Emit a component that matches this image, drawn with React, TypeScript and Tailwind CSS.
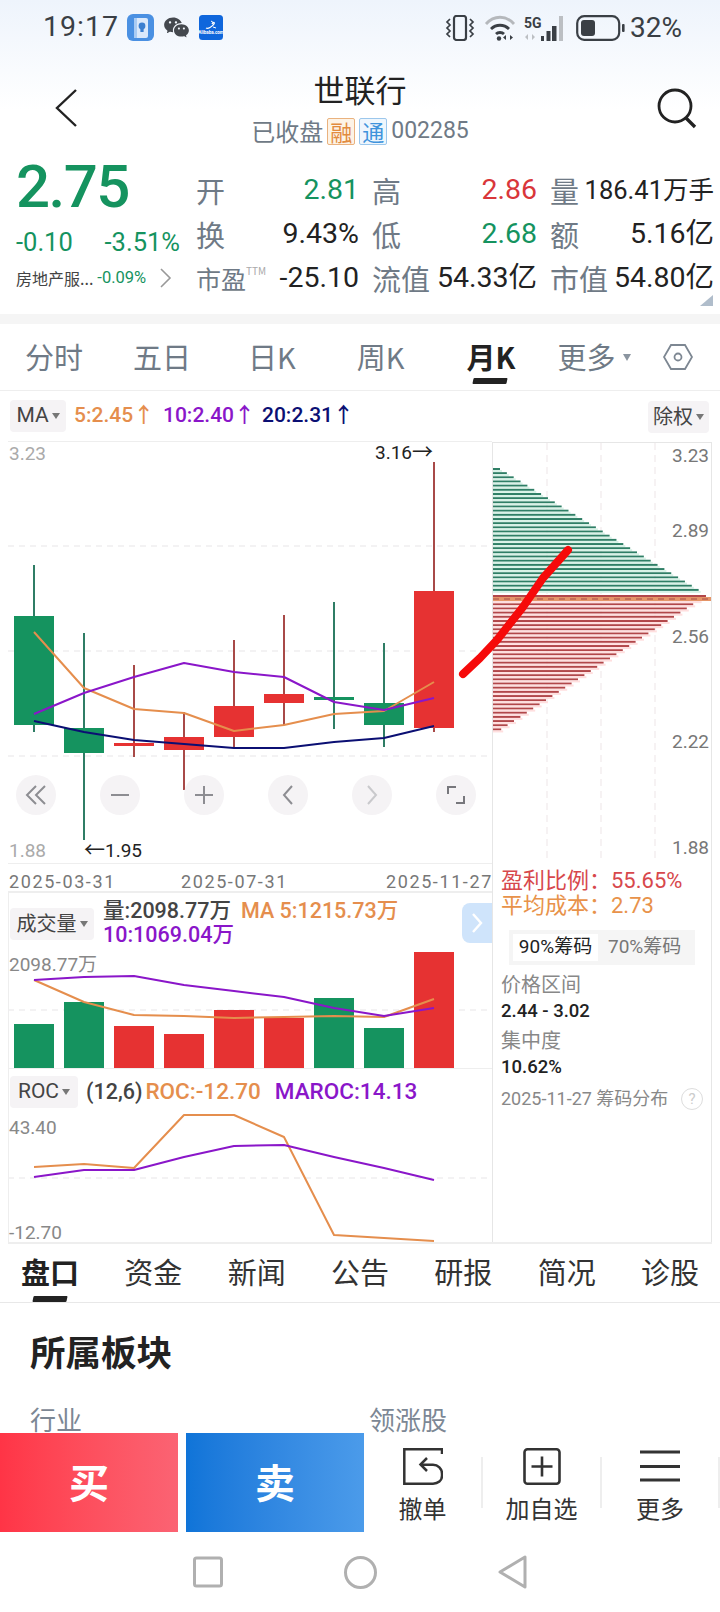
import type { ReactNode } from 'react'
import { RiWechatFill } from 'react-icons/ri'

const cjk = '"Noto Sans CJK SC", sans-serif'
const num = 'Roboto, "Noto Sans CJK SC", sans-serif'

const xs = [34, 84, 134, 184, 234, 284, 334, 384, 434]
const GREEN = '#15935f'
const RED = '#e63232'
const ORANGE = '#e58e4d'
const PURPLE = '#8a16c9'
const NAVY = '#0b0f73'

// [wick top, wick bottom, body top, body bottom, up]
const candles: [number, number, number, number, boolean][] = [
  [565, 732, 616, 725, false],
  [633, 840, 728, 753, false],
  [665, 757, 743, 746, true],
  [712, 790, 737, 750, true],
  [640, 747, 706, 737, true],
  [615, 725, 694, 703, true],
  [602, 729, 697, 700, false],
  [643, 747, 703, 725, false],
  [462, 732, 591, 728, true],
]

const ma5 = [632, 688, 709, 713, 731, 725, 714, 711, 682]
const ma10 = [714, 693, 677, 663, 672, 677, 702, 710, 698]
const ma20 = [721, 732, 740, 744, 748, 748, 742, 738, 726]

const volTops = [1024, 1002, 1026, 1034, 1010, 1018, 998, 1028, 952]
const volUp = [false, false, true, true, true, true, false, false, true]
const volMa5 = [980, 1002, 1015, 1016, 1018, 1017, 1016, 1017, 999]
const volMa10 = [980, 977, 976, 985, 991, 997, 1008, 1016, 1008]

const roc = [1167, 1164, 1168, 1115, 1115, 1137, 1235, 1238, 1241]
const maroc = [1177, 1170, 1170, 1157, 1146, 1145, 1157, 1168, 1180]

const pts = (ys: number[]) => ys.map((y, i) => `${xs[i]},${y}`).join(' ')

function Line({ ys, color }: { ys: number[]; color: string }) {
  return <polyline points={pts(ys)} fill="none" stroke={color} strokeWidth="2" strokeLinejoin="round" />
}

function Dash({ y, x1 = 8, x2 = 492 }: { y: number; x1?: number; x2?: number }) {
  return <line x1={x1} x2={x2} y1={y} y2={y} stroke="#efeef0" strokeWidth="1.5" strokeDasharray="6 5" />
}

function Rule({ thick }: { thick?: boolean }) {
  return <div className={`ml-[8px] shrink-0 bg-[#eeeeee] ${thick ? 'h-[2px]' : 'h-px'}`} />
}

function Chip({ label, className }: { label: string; className: string }) {
  return (
    <div className={`flex h-8 items-center justify-center gap-[3px] rounded bg-[#f5f3f5] text-[21px] font-normal text-[#444] ${className}`}>
      <span>{label}</span>
      <span className="border-x-[4.5px] border-t-[6px] border-x-transparent border-t-[#777]" />
    </div>
  )
}

function StatusBar() {
  return (
    <div className="flex h-[54px] items-center pl-[43px] pr-[38px] pt-[1px]" style={{ fontFamily: num }}>
      <span className="text-[28.5px] leading-none tracking-[1px] text-[#3a3f45]">19:17</span>
      <svg className="ml-[8px]" width="27" height="27" viewBox="0 0 27 27">
        <rect width="27" height="27" rx="6" fill="#4a90e2" />
        <path d="M7 4h12a2 2 0 012 2v16a2 2 0 01-2 2H7z" fill="#dbe9fb" />
        <rect x="7" y="4" width="3" height="20" fill="#a9cbf3" />
        <circle cx="15" cy="12" r="3.4" fill="#3b7fd0" />
        <rect x="13.4" y="15" width="3.2" height="3" fill="#3b7fd0" />
      </svg>
      <RiWechatFill className="ml-[9px] text-[#44484e]" size={27} />
      <svg className="ml-[9px]" width="24" height="25" viewBox="0 0 24 25">
        <rect width="24" height="25" rx="3.5" fill="#0f66dc" />
        <path d="M7 13c2 1 6-1 8-4 1-2-1-2-2 0" fill="none" stroke="#fff" strokeWidth="1.3" />
        <path d="M12 6l3 2M14 12l3 1" fill="none" stroke="#fff" strokeWidth="1" />
        <text x="12" y="19" fontSize="4.5" fontWeight="700" fill="#fff" textAnchor="middle">Alibaba.com</text>
      </svg>
      <svg className="ml-auto" width="30" height="26" viewBox="0 0 30 26" fill="none" stroke="#3a3f45" strokeWidth="2.2">
        <rect x="9" y="1" width="12" height="24" rx="2.5" />
        <path d="M5 4L2 7l3 3-3 3 3 3-3 3 3 3M25 4l3 3-3 3 3 3-3 3 3 3-3 3" strokeWidth="1.7" />
      </svg>
      <svg className="ml-[9px]" width="32" height="26" viewBox="0 0 32 26" fill="none">
        <path d="M2 9c8-9 20-9 28 0" strokeWidth="2.8" stroke="#b5b8bc" />
        <path d="M7 14c5-5 13-5 18 0" strokeWidth="2.8" stroke="#3a3f45" />
        <path d="M12 19c2-2 6-2 8 0" strokeWidth="2.8" stroke="#3a3f45" />
        <circle cx="15" cy="23.5" r="2.2" fill="#3a3f45" />
        <path d="M22 20v5l-3-2.5zM26 20v5l3-2.5z" fill="#3a3f45" />
      </svg>
      <div className="relative ml-[8px] h-[26px] w-[40px]">
        <span className="absolute left-0 top-[1px] text-[14px] font-bold leading-none text-[#3a3f45]">5G</span>
        <svg className="absolute inset-0" width="40" height="26" viewBox="0 0 40 26" fill="#3a3f45">
          <rect x="17" y="21" width="3" height="5" />
          <rect x="22.5" y="16" width="4" height="10" />
          <rect x="28" y="11" width="4.5" height="15" />
          <rect x="35" y="1" width="4" height="25" fill="#bcbfc3" />
          <path d="M4 19v6l-3-3zM8 19v6l3-3z" fill="#bcbfc3" />
        </svg>
      </div>
      <svg className="ml-[12px]" width="49" height="26" viewBox="0 0 49 26">
        <rect x="1.2" y="1.2" width="42" height="23.6" rx="7" fill="none" stroke="#3a3f45" strokeWidth="2.2" />
        <rect x="5" y="5" width="14" height="16" rx="3" fill="#3a3f45" />
        <rect x="46" y="9" width="2.6" height="8" rx="1" fill="#3a3f45" />
      </svg>
      <span className="ml-[5px] text-[28px] leading-none text-[#3a3f45]">32%</span>
    </div>
  )
}

function TitleBar() {
  return (
    <div className="grid h-[98px] grid-cols-[1fr_auto_1fr] items-start px-[22px]">
      <svg className="ml-[32px] mt-[34px]" width="24" height="40" viewBox="0 0 24 40" fill="none" stroke="#222" strokeWidth="2.4">
        <path d="M22 2L3 20l19 18" />
      </svg>
      <div className="flex flex-col items-center" style={{ fontFamily: cjk }}>
        <div className="mt-[15px] h-[40px] text-[31px] leading-[40px] text-[#222]">世联行</div>
        <div className="mt-[8px] flex items-center gap-[4px] text-[24px] leading-[28px] text-[#6f7a86]">
          <span>已收盘</span>
          <span className="flex h-[27px] w-[28px] items-center justify-center rounded-[2px] border border-[#eab27e] bg-[#fdf3e6] text-[22px] text-[#e28b3e]">融</span>
          <span className="flex h-[27px] w-[28px] items-center justify-center rounded-[2px] border border-[#9cc7ec] bg-[#eef6fd] text-[22px] text-[#3f93dc]">通</span>
          <span style={{ fontFamily: num }} className="text-[23px]">002285</span>
        </div>
      </div>
      <svg className="mt-[34px] justify-self-end" width="42" height="42" viewBox="0 0 42 42" fill="none" stroke="#222" strokeWidth="2.8">
        <circle cx="19" cy="18" r="16" />
        <path d="M30 30l9 9" strokeWidth="3.4" />
      </svg>
    </div>
  )
}

function Cell({ label, value, color = '#222', small }: { label: string; value: string; color?: string; small?: boolean }) {
  return (
    <div className="flex h-[44px] items-center justify-between">
      <span className="text-[29px] leading-[40px] text-[#6f7a86]" style={{ fontFamily: cjk }}>{label}</span>
      <span className={`leading-[44px] ${small ? 'text-[25.5px]' : 'text-[28.5px]'}`} style={{ color, fontFamily: num }}>{value}</span>
    </div>
  )
}

function Quote() {
  return (
    <div className="relative flex h-[162px] pl-[16px] pr-[6px]">
      <div className="w-[164px] shrink-0" style={{ fontFamily: num }}>
        <div className="h-[70px] text-[60px] font-medium leading-[70px] tracking-[-1.5px] text-[#15935f]">2.75</div>
        <div className="mt-[5px] flex justify-between text-[25.5px] leading-[30px] text-[#15935f]">
          <span>-0.10</span>
          <span>-3.51%</span>
        </div>
        <div className="mt-[8px] flex items-center whitespace-nowrap text-[16.5px] leading-[26px]">
          <span className="text-[#444] text-[16px]" style={{ fontFamily: cjk }}>房地产服...</span>
          <span className="ml-[4px] text-[#15935f]">-0.09%</span>
          <svg className="ml-[13px] shrink-0" width="13" height="20" viewBox="0 0 13 20" fill="none" stroke="#999" strokeWidth="1.6">
            <path d="M2 1l9 9-9 9" />
          </svg>
        </div>
      </div>
      <div className="ml-[16px] grid flex-1 grid-cols-[163px_165px_1fr] content-start gap-x-[13px] pt-[16px]">
        <Cell label="开" value="2.81" color="#15935f" />
        <Cell label="高" value="2.86" color="#d9363a" />
        <Cell label="量" value="186.41万手" small />
        <Cell label="换" value="9.43%" />
        <Cell label="低" value="2.68" color="#15935f" />
        <Cell label="额" value="5.16亿" />
        <div className="flex h-[44px] items-center justify-between">
          <span className="flex items-start whitespace-nowrap text-[25px] leading-[30px] text-[#6f7a86]" style={{ fontFamily: cjk }}>
            市盈<span className="text-[10px] leading-[16px] text-[#aaa]">TTM</span>
          </span>
          <span className="text-[28.5px] leading-[44px] text-[#222]" style={{ fontFamily: num }}>-25.10</span>
        </div>
        <Cell label="流值" value="54.33亿" />
        <Cell label="市值" value="54.80亿" />
      </div>
      <span className="absolute bottom-[8px] right-[7px] border-b-[11px] border-l-[13px] border-b-[#b0bdcb] border-l-transparent" />
    </div>
  )
}

function PeriodTabs() {
  const tabs = ['分时', '五日', '日K', '周K']
  return (
    <div className="relative flex h-[67px] items-center border-b border-[#eeeeee] text-[29px] text-[#6f7a86]" style={{ fontFamily: cjk }}>
      <span className="ml-[25px]">{tabs[0]}</span>
      <span className="ml-[50px]">{tabs[1]}</span>
      <span className="ml-[57px]">{tabs[2]}</span>
      <span className="ml-[61px]">{tabs[3]}</span>
      <span className="relative ml-[62px] font-bold text-[#222]">
        月K
        <span className="absolute left-[6px] top-[43px] h-[6px] w-[34px] -skew-x-12 rounded-[1px] bg-[#222]" />
      </span>
      <span className="ml-[42px]">更多</span>
      <span className="ml-[8px] border-x-[4.5px] border-t-[7px] border-x-transparent border-t-[#8b95a0]" />
      <svg className="ml-[32px]" width="30" height="28" viewBox="0 0 30 28" fill="none" stroke="#7d8792" strokeWidth="1.8">
        <path d="M8 2h14l7 12-7 12H8L1 14z" />
        <circle cx="15" cy="14" r="3.5" />
      </svg>
    </div>
  )
}

function RoundBtn({ children }: { children: ReactNode }) {
  return <div className="flex h-10 w-10 items-center justify-center rounded-full bg-[#f5f3f5]">{children}</div>
}

function Arrow({ children }: { children: string }) {
  return <span className="text-[21px] leading-none" style={{ fontFamily: cjk }}>{children}</span>
}

function KChart() {
  return (
    <div className="relative h-[421px] shrink-0">
      <svg className="absolute inset-0" width="492" height="420" viewBox="0 442 492 420">
        <Dash y={546} />
        <Dash y={651} />
        <Dash y={756} />
        {candles.map(([wt, wb, bt, bb, up], i) => (
          <g key={i}>
            <line x1={xs[i]} x2={xs[i]} y1={wt} y2={wb} stroke={up ? '#a84a48' : '#2f7d65'} strokeWidth="2" />
            <rect x={xs[i] - 20} y={bt} width="40" height={bb - bt} fill={up ? RED : GREEN} />
          </g>
        ))}
        <Line ys={ma5} color={ORANGE} />
        <Line ys={ma10} color={PURPLE} />
        <Line ys={ma20} color={NAVY} />
      </svg>
      <span className="absolute left-[9px] top-0 text-[19px] leading-[24px] text-[#aaa]">3.23</span>
      <span className="absolute left-[375px] -top-[2px] whitespace-nowrap text-[19px] leading-[24px] text-[#222]">3.16<Arrow>→</Arrow></span>
      <span className="absolute left-[84px] top-[396px] whitespace-nowrap text-[19px] leading-[24px] text-[#222]"><Arrow>←</Arrow>1.95</span>
      <span className="absolute bottom-0 left-[9px] text-[19px] leading-[24px] text-[#aaa]">1.88</span>
      <div className="absolute left-[16px] top-[333px] flex w-[460px] justify-between">
        <RoundBtn>
          <svg width="22" height="20" viewBox="0 0 22 20" fill="none" stroke="#8d8d92" strokeWidth="2"><path d="M11 1l-9 9 9 9M20 1l-9 9 9 9" /></svg>
        </RoundBtn>
        <RoundBtn>
          <svg width="20" height="4" viewBox="0 0 20 4" fill="none" stroke="#8d8d92" strokeWidth="2"><path d="M1 2h18" /></svg>
        </RoundBtn>
        <RoundBtn>
          <svg width="20" height="20" viewBox="0 0 20 20" fill="none" stroke="#8d8d92" strokeWidth="2"><path d="M1 10h18M10 1v18" /></svg>
        </RoundBtn>
        <RoundBtn>
          <svg width="12" height="20" viewBox="0 0 12 20" fill="none" stroke="#8d8d92" strokeWidth="2"><path d="M10 1l-8 9 8 9" /></svg>
        </RoundBtn>
        <RoundBtn>
          <svg width="12" height="20" viewBox="0 0 12 20" fill="none" stroke="#c9c9cc" strokeWidth="2"><path d="M2 1l8 9-8 9" /></svg>
        </RoundBtn>
        <RoundBtn>
          <svg width="20" height="20" viewBox="0 0 20 20" fill="none" stroke="#77777c" strokeWidth="2"><path d="M10 2H2v7M10 18h8v-7" /></svg>
        </RoundBtn>
      </div>
    </div>
  )
}

function VolumePanel() {
  return (
    <div className="relative h-[175px] shrink-0">
      <svg className="absolute inset-0" width="492" height="175" viewBox="0 893 492 175">
        <line x1={8.5} x2={8.5} y1={893} y2={1068} stroke="#eeeeee" />
        <Dash y={1010} />
        {xs.map((x, i) => (
          <rect key={x} x={x - 20} y={volTops[i]} width="40" height={1068 - volTops[i]} fill={volUp[i] ? RED : GREEN} />
        ))}
        <Line ys={volMa5} color={ORANGE} />
        <Line ys={volMa10} color={PURPLE} />
      </svg>
      <div className="relative flex h-[59px] pl-[10px]">
        <Chip label="成交量" className="mt-[15px] w-[84px] !text-[20px]" />
        <div className="ml-[9px] mt-[6px] text-[21.5px] font-medium leading-[24px]" style={{ fontFamily: num }}>
          <div className="whitespace-nowrap">
            <span className="text-[#444]">量:2098.77万</span>
            <span className="ml-[10px] text-[#e58e4d]">MA 5:1215.73万</span>
          </div>
          <div className="text-[#8a16c9]">10:1069.04万</div>
        </div>
        <div className="absolute right-0 top-[10px] flex h-[40px] w-[30px] items-center justify-center rounded-l-lg bg-[#cfe4fb]">
          <svg width="12" height="22" viewBox="0 0 12 22" fill="none" stroke="#fff" strokeWidth="2.4"><path d="M2 2l8 9-8 9" /></svg>
        </div>
      </div>
      <span className="absolute left-[9px] top-[60px] text-[19px] leading-[24px] text-[#888]">2098.77万</span>
    </div>
  )
}

function RocPanel() {
  return (
    <div className="relative h-[173px] shrink-0">
      <svg className="absolute inset-0" width="492" height="173" viewBox="0 1069 492 173">
        <line x1={8.5} x2={8.5} y1={1069} y2={1242} stroke="#eeeeee" />
        <Dash y={1178} />
        <Line ys={roc} color={ORANGE} />
        <Line ys={maroc} color={PURPLE} />
      </svg>
      <div className="relative flex items-center pl-[10px] pt-[6px] text-[22.5px] font-medium" style={{ fontFamily: num }}>
        <Chip label="ROC" className="w-[68px]" />
        <span className="ml-[8px] text-[21.5px] text-[#444]">(12,6)</span>
        <span className="ml-[3px] text-[#e58e4d]">ROC:-12.70</span>
        <span className="ml-[14px] text-[#8a16c9]">MAROC:14.13</span>
      </div>
      <span className="absolute left-[9px] top-[47px] text-[19px] leading-[24px] text-[#888]">43.40</span>
      <span className="absolute left-[9px] top-[152px] text-[19px] leading-[24px] text-[#888]">-12.70</span>
    </div>
  )
}

function ChipDistribution() {
  const green = Array.from({ length: 30 }, (_, i) => ({ y: 467 + i * 4.17, w: 7 + i * 6.85 }))
  const red = Array.from({ length: 33 }, (_, i) => ({ y: 594 + i * 4.17, w: 213 - i * 6.4 }))
  return (
    <div className="relative h-[420px]">
      <svg className="absolute inset-0" width="218" height="420" viewBox="493 442 218 420">
        {[547, 601, 655].map((x) => (
          <line key={x} x1={x} x2={x} y1={442} y2={862} stroke="#f3eef0" strokeWidth="1.5" strokeDasharray="7 5" />
        ))}
        {green.map((r) => (
          <g key={r.y}>
            <rect x={493} y={r.y} width={r.w} height={2} fill="#2f7f66" />
            <rect x={493} y={r.y + 2} width={r.w + 2} height={2} fill="#d8f2e7" />
          </g>
        ))}
        {red.map((r) => (
          <g key={r.y}>
            <rect x={493} y={r.y} width={r.w} height={2} fill="#b2474a" />
            <rect x={493} y={r.y + 2} width={r.w + 2} height={2} fill="#ffdfdf" />
          </g>
        ))}
        <rect x={493} y={596} width={218} height={4} fill="#e59568" />
        <line x1={493} x2={711} y1={598} y2={598} stroke="#a84a48" strokeWidth="1" strokeDasharray="6 5" />
      </svg>
      {[
        ['3.23', 'top-[1px]'],
        ['2.89', 'top-[76px]'],
        ['2.56', 'top-[182px]'],
        ['2.22', 'top-[287px]'],
        ['1.88', 'top-[393px]'],
      ].map(([v, pos]) => (
        <span key={v} className={`absolute right-[2px] text-[19px] leading-[24px] text-[#777] ${pos}`}>{v}</span>
      ))}
    </div>
  )
}

function ChipStats() {
  return (
    <div className="pl-[8px] pr-[8px] pt-[5px]" style={{ fontFamily: num }}>
      <div className="whitespace-nowrap text-[22px] leading-[25px] text-[#d7484c]">盈利比例：55.65%</div>
      <div className="whitespace-nowrap text-[22px] leading-[25px] text-[#e8924a]">平均成本：2.73</div>
      <div className="ml-[8px] mt-[12px] flex h-[35px] w-[186px] items-center bg-[#f5f5f5] pl-[4px] text-[19px]">
        <span className="flex h-[27px] w-[85px] items-center justify-center bg-white text-[#222]">90%筹码</span>
        <span className="ml-[10px] whitespace-nowrap text-[#777]">70%筹码</span>
      </div>
      <div className="mt-[7px] text-[20px] leading-[26px] text-[#888]">价格区间</div>
      <div className="text-[18.5px] font-medium leading-[26px] text-[#222]">2.44 - 3.02</div>
      <div className="mt-[4px] text-[20px] leading-[26px] text-[#888]">集中度</div>
      <div className="text-[18.5px] font-medium leading-[26px] text-[#222]">10.62%</div>
      <div className="mt-[6px] flex items-center text-[18px] leading-[26px] text-[#888]">
        <span className="whitespace-nowrap">2025-11-27 筹码分布</span>
        <span className="ml-auto flex h-[22px] w-[22px] shrink-0 items-center justify-center rounded-full border-[1.5px] border-[#ddd] text-[15px] text-[#ccc]">?</span>
      </div>
    </div>
  )
}

function ChartSection() {
  return (
    <div className="relative flex h-[853px] flex-col" style={{ fontFamily: num }}>
      <div className="flex h-[851px]">
        <div className="flex w-[492px] shrink-0 flex-col">
          <div className="flex h-[50px] shrink-0 items-center pl-[10px] text-[21px] font-medium">
            <Chip label="MA" className="w-[56px]" />
            <span className="ml-[8px] w-[89px] whitespace-nowrap text-[#e58e4d]">5:2.45<Arrow>↑</Arrow></span>
            <span className="w-[99px] whitespace-nowrap text-[#8a16c9]">10:2.40<Arrow>↑</Arrow></span>
            <span className="whitespace-nowrap text-[#0b0f73]">20:2.31<Arrow>↑</Arrow></span>
          </div>
          <Rule />
          <KChart />
          <Rule />
          <div className="grid h-[27px] shrink-0 grid-cols-[172px_205px_1fr] items-center whitespace-nowrap pl-[9px] pt-[4px] text-[18px] tracking-[1.6px] text-[#777]">
            <span>2025-03-31</span>
            <span>2025-07-31</span>
            <span>2025-11-27</span>
          </div>
          <Rule thick />
          <VolumePanel />
          <Rule />
          <RocPanel />
        </div>
        <div className="flex w-[220px] shrink-0 flex-col">
          <div className="flex h-[51px] shrink-0 items-center justify-end pr-[3px]">
            <Chip label="除权" className="w-[61px] !text-[20px]" />
          </div>
          <div className="flex-1 border-x border-t border-[#e6e6e6]">
            <ChipDistribution />
            <ChipStats />
          </div>
        </div>
      </div>
      <div className="ml-[8px] mr-[8px] h-[2px] bg-[#eeeeee]" />
      {/* finger-drawn stroke over the chart */}
      <svg className="pointer-events-none absolute inset-0" width="720" height="853" viewBox="0 391 720 853">
        <polyline
          points="463,674 480,658 497,640 523,607 543,578 552,568 568,550"
          fill="none"
          stroke="#f60a0a"
          strokeWidth="8"
          strokeLinecap="round"
          strokeLinejoin="round"
        />
      </svg>
    </div>
  )
}

function InfoTabs() {
  const tabs = ['盘口', '资金', '新闻', '公告', '研报', '简况', '诊股']
  return (
    <div className="flex h-[59px] items-start justify-between border-b border-[#e8e8e8] px-[21px] pt-[7px] text-[29px] leading-[40px] text-[#333]" style={{ fontFamily: cjk }}>
      {tabs.map((t, i) => (
        <span key={t} className={`relative ${i === 0 ? 'font-bold text-[#222]' : ''}`}>
          {t}
          {i === 0 && <span className="absolute left-[12px] top-[45px] h-[6px] w-[34px] -skew-x-12 rounded-[1px] bg-[#222]" />}
        </span>
      ))}
    </div>
  )
}

function Sectors() {
  return (
    <div className="h-[130px] overflow-hidden pl-[30px] pt-[26px]" style={{ fontFamily: cjk }}>
      <div className="text-[35.5px] font-bold leading-[44px] text-[#222]">所属板块</div>
      <div className="mt-[28px] flex text-[26px] leading-[36px] text-[#7c8794]">
        <span className="w-[339px]">行业</span>
        <span>领涨股</span>
      </div>
    </div>
  )
}

function BottomBar() {
  return (
    <div className="flex h-[99px] bg-white" style={{ fontFamily: cjk }}>
      <div className="flex w-[178px] items-center justify-center bg-gradient-to-r from-[#ff3446] to-[#fb6373] pb-[4px] text-[40px] font-bold text-white">买</div>
      <div className="ml-[8px] flex w-[178px] items-center justify-center bg-gradient-to-r from-[#0f74d8] to-[#4b9bea] pb-[4px] text-[40px] font-bold text-white">卖</div>
      <div className="flex flex-1 text-[24px] leading-[30px] text-[#333]">
        <div className="flex w-[117px] flex-col items-center pt-[15px]">
          <svg width="40" height="37" viewBox="0 0 40 37" fill="none" stroke="#333" strokeWidth="2.5">
            <path d="M39 6V1.3H1.3v34.4H30c5 0 9-3 9-8v-2c0-5-4-9-9-9H18" />
            <path d="M24 10l-6.5 6.5L24 23" />
          </svg>
          <span className="mt-[8px]">撤单</span>
        </div>
        <div className="mt-[24px] h-[51px] w-[2px] bg-[#eeeeee]" />
        <div className="flex w-[117px] flex-col items-center pt-[15px]">
          <svg width="38" height="37" viewBox="0 0 38 37" fill="none" stroke="#333" strokeWidth="2.6">
            <rect x="1.5" y="1.3" width="35" height="34.4" rx="3" />
            <path d="M19 8.5v20M8.5 18.5h21" />
          </svg>
          <span className="mt-[8px]">加自选</span>
        </div>
        <div className="mt-[24px] h-[51px] w-[2px] bg-[#eeeeee]" />
        <div className="flex w-[116px] flex-col items-center pt-[15px]">
          <svg width="40" height="37" viewBox="0 0 40 37" fill="none" stroke="#333" strokeWidth="2.8">
            <path d="M0 4h40M0 18.500h40M0 32h40" />
          </svg>
          <span className="mt-[8px]">更多</span>
        </div>
        <div className="mt-[24px] h-[51px] w-[2px] bg-[#eeeeee]" />
      </div>
    </div>
  )
}

function NavBar() {
  return (
    <div className="flex flex-1 items-center justify-center gap-[121px]">
      <svg width="30" height="32" viewBox="0 0 30 32" fill="none" stroke="#b0b0b0" strokeWidth="3">
        <rect x="1.5" y="2" width="27" height="28" rx="2" />
      </svg>
      <svg width="33" height="33" viewBox="0 0 33 33" fill="none" stroke="#b0b0b0" strokeWidth="3">
        <circle cx="16.5" cy="16.5" r="15" />
      </svg>
      <svg width="30" height="34" viewBox="0 0 30 34" fill="none" stroke="#b0b0b0" strokeWidth="3" strokeLinejoin="round">
        <path d="M27 2v30L2 17z" />
      </svg>
    </div>
  )
}

export default function App() {
  return (
    <div className="flex h-[1612px] w-[720px] flex-col overflow-hidden bg-white" style={{ fontFamily: num }}>
      <div className="bg-gradient-to-b from-[#eef4fc] to-white to-[110px]">
        <StatusBar />
        <TitleBar />
      </div>
      <Quote />
      <div className="h-[10px] bg-[#f5f5f5]" />
      <PeriodTabs />
      <ChartSection />
      <InfoTabs />
      <Sectors />
      <BottomBar />
      <NavBar />
    </div>
  )
}
